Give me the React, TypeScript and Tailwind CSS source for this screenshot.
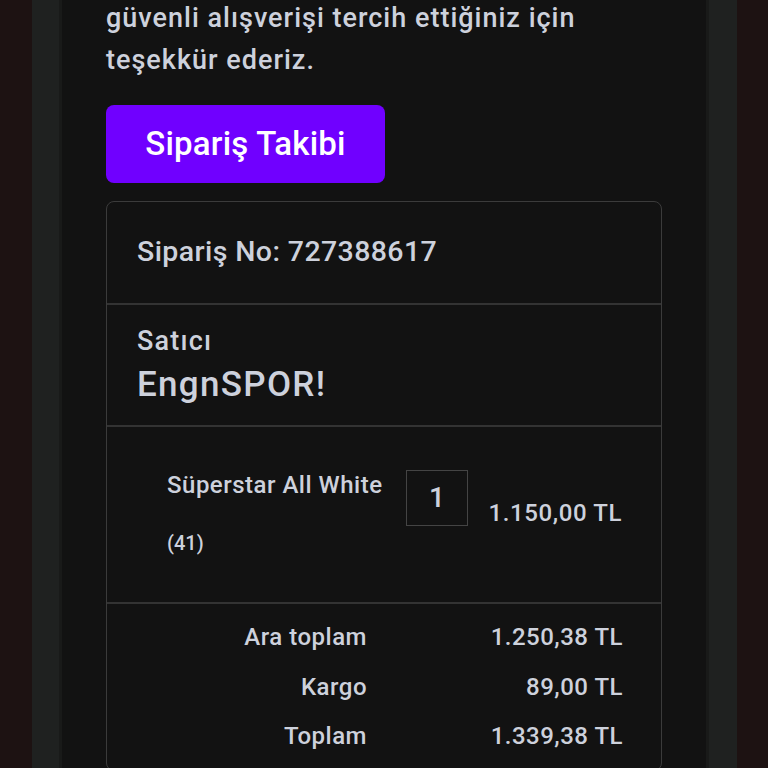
export default function App() {
  return (
    <div
      className="flex h-[768px] w-[768px] overflow-hidden bg-[#1d1212]"
      style={{ fontFamily: "Roboto, 'Noto Sans', sans-serif" }}
    >
      <div className="ml-[32px] flex w-[705px] bg-[#1f2120] px-[27px]">
        <div className="w-[650px] shrink-0 border-x-[3px] border-[#191a19] bg-[#121212] px-[44px] font-medium text-[#cdd1dc]">
          <p className="mt-[-3px] text-[27px] leading-[42px] tracking-[1px]">
            güvenli alışverişi tercih ettiğiniz için
            <br />
            teşekkür ederiz.
          </p>

          <button className="mt-[24px] h-[78px] w-[279px] rounded-lg bg-[#7000ff] text-[33px] font-medium tracking-[0.2px] text-white">
            Sipariş Takibi
          </button>

          <div className="mt-[18px] rounded-lg border border-[#3b3b3b]">
            <div className="flex h-[101px] items-center px-[30px] text-[28.5px] tracking-[0.4px]">
              Sipariş No: 727388617
            </div>

            <div className="h-[122px] border-t-2 border-[#333] px-[30px] pt-[18px]">
              <div className="text-[27px] leading-[36px] tracking-[1.2px]">Satıcı</div>
              <div className="text-[35px] leading-[52px] tracking-[1.3px]">EngnSPOR!</div>
            </div>

            <div className="flex h-[177px] border-t-2 border-[#333] pl-[60px] pr-[39px] pt-[43px]">
              <div className="w-[239px]">
                <div className="text-[24px] leading-[30px] tracking-[0.5px]">Süperstar All White</div>
                <div className="mt-[28px] text-[20px] leading-[30px]">(41)</div>
              </div>
              <div className="flex h-[56px] w-[62px] items-center justify-center border border-[#444] text-[28px]">
                1
              </div>
              <div className="mt-[28px] flex-1 text-right text-[24px] leading-[30px] tracking-[0.6px]">
                1.150,00 TL
              </div>
            </div>

            <div className="border-t-2 border-[#333] pr-[38px] pt-[17px] text-[24px] tracking-[0.5px]">
              <div className="flex h-[50px] items-start">
                <div className="w-[260px] text-right leading-[32px]">Ara toplam</div>
                <div className="flex-1 text-right leading-[32px]">1.250,38 TL</div>
              </div>
              <div className="flex h-[49px] items-start">
                <div className="w-[260px] text-right leading-[32px]">Kargo</div>
                <div className="flex-1 text-right leading-[32px]">89,00 TL</div>
              </div>
              <div className="flex h-[50px] items-start">
                <div className="w-[260px] text-right leading-[32px]">Toplam</div>
                <div className="flex-1 text-right leading-[32px]">1.339,38 TL</div>
              </div>
            </div>
          </div>
        </div>
      </div>
    </div>
  );
}
